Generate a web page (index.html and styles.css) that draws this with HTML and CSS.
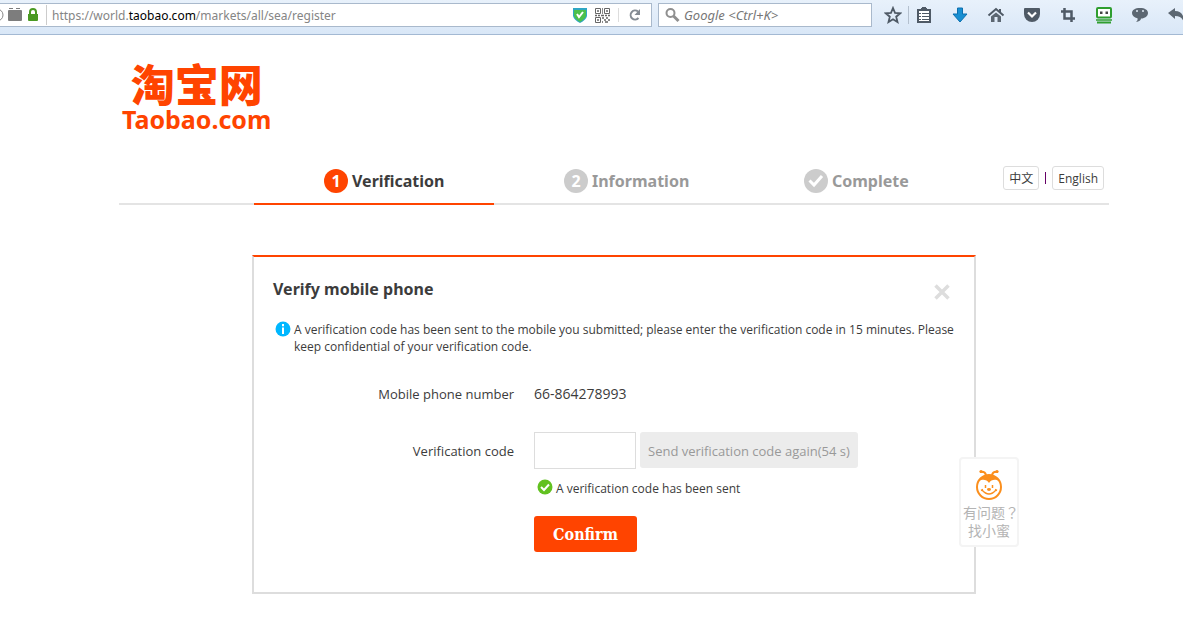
FILE: index.html
```html
<!DOCTYPE html>
<html lang="en">
<head>
    <meta charset="UTF-8">
    <meta name="viewport" content="width=device-width, initial-scale=1.0">
    <title>Taobao Register</title>
    <link rel="stylesheet" href="styles.css">
</head>
<body>

    <div class="toolbar">
        <div class="urlbar">
            <svg class="site-icons" width="40" height="16" viewBox="0 0 40 16">
                <circle cx="-3" cy="8" r="6" fill="none" stroke="#888"/>
                <path d="M9 1h4v1H9zM16 1h4v1h-4zM8 4q0-1 1-1h12q1 0 1 1v9q0 1-1 1H9q-1 0-1-1z" fill="#7d7d7d"/>
                <path d="M28 7h10v6q0 1-1 1h-8q-1 0-1-1z" fill="#4a9a22"/>
                <path d="M30 7V5a3 3 0 0 1 6 0v2" fill="none" stroke="#4a9a22" stroke-width="2"/>
            </svg>
            <div class="url" role="textbox" aria-label="Address" contenteditable="true" spellcheck="false">https://world.<span class="domain">taobao.com</span>/markets/all/sea/register</div>
            <svg width="14" height="16" viewBox="0 0 14 16">
                <path d="M0 1h14v8q-1 4-7 7-6-3-7-7z" fill="#2fa7c4"/>
                <path d="M1 3h12v6q-1 3-6 6-5-3-6-6z" fill="#4cc04a"/>
                <path d="M4 7l2 3 4-5" fill="none" stroke="#fff" stroke-width="2"/>
            </svg>
            <svg class="qr" width="15" height="15" viewBox="0 0 15 15" fill="none" stroke="#666">
                <path d="M.5.5h5v5h-5zM9.500.5h5v5h-5zM.5 9.500h5v5h-5z"/>
                <path d="M2 3h2M11 3h2M2 12h2M7 1h1M7 3h1M7 5h1M0 7.500h2M3 7.500h2M6 7.500h3M10 7.500h2M13 7.500h2M7 10h2M11 10h2M9 12h2M13 12h2M7 14h1M10 14h3" stroke-width="1.500"/>
            </svg>
            <button class="reload" type="button" aria-label="Reload">
                <svg width="14" height="14" viewBox="0 0 14 14">
                    <path d="M10 3.500A4.500 4.500 0 1 0 10.500 10" fill="none" stroke="#848b93" stroke-width="2"/>
                    <path d="M12 1v6H6.500z" fill="#848b93"/>
                </svg>
            </button>
        </div>
        <label class="searchbar">
            <svg width="16" height="16" viewBox="0 0 16 16" fill="none" stroke="#8f8f8f">
                <circle cx="5.500" cy="6" r="4" stroke-width="2"/>
                <path d="M8.500 9l5 5" stroke-width="3"/>
            </svg>
            <input type="text" class="search-input" placeholder="Google &lt;Ctrl+K&gt;" aria-label="Search">
        </label>
        <div class="tools">
            <button class="tool star" type="button" aria-label="Bookmark">
                <svg width="18" height="18" viewBox="0 0 18 18"><path d="M9 2l2 4.800 5.200.5-4 3.400 1.300 5.300L9 13.200 4.500 16l1.300-5.300-4-3.400L7 6.800z" fill="none" stroke="#4f5a66" stroke-width="1.800"/></svg>
            </button>
            <button class="tool" type="button" aria-label="Bookmarks list">
                <svg width="18" height="18" viewBox="0 0 18 18"><path d="M3 4h12v12H3z" fill="#fff" stroke="#4f5a66" stroke-width="2"/><path d="M6 4V2h1V1h4v1h1v2z" fill="#4f5a66"/><path d="M4 7.500h2M4 10.500h2M4 13.500h2M7 7.500h7M7 10.500h7M7 13.500h7" stroke="#4f5a66"/></svg>
            </button>
            <button class="tool" type="button" aria-label="Downloads">
                <svg width="18" height="18" viewBox="0 0 18 18"><path d="M6.500 2h5v6H16l-7 8-7-8h4.500z" fill="#188fd2" stroke="#0c6fae"/></svg>
            </button>
            <button class="tool" type="button" aria-label="Home">
                <svg width="18" height="18" viewBox="0 0 18 18"><path d="M1.500 9.500L9 3l7.500 6.500M13 3v3" fill="none" stroke="#4f5a66" stroke-width="2"/><path d="M4 10.500l5-4 5 4V16h-3.500v-5h-3v5H4z" fill="#5c6772"/></svg>
            </button>
            <button class="tool" type="button" aria-label="Pocket">
                <svg width="18" height="18" viewBox="0 0 18 18"><path d="M2 2h14q1 0 1 1v5a8 8 0 0 1-16 0V3q0-1 1-1z" fill="#4f5a66"/><path d="M5 6.500l4 4 4-4" fill="none" stroke="#fff" stroke-width="2.200"/></svg>
            </button>
            <button class="tool" type="button" aria-label="Screenshot">
                <svg width="18" height="18" viewBox="0 0 18 18"><path d="M5.500 2v10.500H16M2 5.500h10.500V16" fill="none" stroke="#4f5a66" stroke-width="2.500"/></svg>
            </button>
            <button class="tool" type="button" aria-label="Form filler">
                <svg width="18" height="18" viewBox="0 0 18 18"><rect x="2" y="2" width="14" height="9.500" rx="1" fill="#fff" stroke="#2f9e2f" stroke-width="2"/><path d="M5 5.500h2.500V8H5zM10.500 5.500H13V8h-2.500z" fill="#444"/><path d="M1 14h16" stroke="#2f9e2f" stroke-width="1.500"/><path d="M2 16.500h14" stroke="#2f9e2f" stroke-width="2"/></svg>
            </button>
            <button class="tool" type="button" aria-label="Chat">
                <svg width="18" height="18" viewBox="0 0 18 18"><path d="M9 2c5 0 8 2 8 5s-3 5.500-7 5.500c0 2-2 3-5 3.500 1-1 2-2 1.500-3.800C3 11.500 1 9.500 1 7c0-3 3-5 8-5z" fill="#5c6772"/><circle cx="6" cy="5" r="1" fill="#dfe9f5"/><circle cx="12" cy="5" r="1" fill="#dfe9f5"/></svg>
            </button>
            <button class="tool" type="button" aria-label="Undo">
                <svg width="18" height="18" viewBox="0 0 18 18"><path d="M1 7l7-5v3c6 0 9 4 9 11-2-4-4-6-9-6v3z" fill="#5c6772"/></svg>
            </button>
        </div>
    </div>

    <div class="container">
        <a class="logo" href="#">
            <span class="logo-cn" lang="zh-CN">淘宝网</span>
            <span class="logo-en">Taobao.com</span>
        </a>

        <div class="steps-bar">
            <ol class="steps">
                <li class="step active"><span class="num">1</span>Verification</li>
                <li class="step"><span class="num">2</span>Information</li>
                <li class="step"><span class="num"><svg width="16" height="14" viewBox="0 0 16 14"><path d="M1.500 6.500L6 11l8-9" fill="none" stroke="#fff" stroke-width="3"/></svg></span>Complete</li>
            </ol>
            <div class="lang">
                <a href="#" lang="zh-CN">中文</a>
                <span class="divider"></span>
                <a href="#">English</a>
            </div>
        </div>

        <div class="panel">
            <div class="panel-head">
                <h2>Verify mobile phone</h2>
                <button class="close" type="button" aria-label="Close">
                    <svg width="16" height="16" viewBox="0 0 16 16"><path d="M1.500 1.500l13 13M14.500 1.500l-13 13" stroke="#ddd" stroke-width="3.500"/></svg>
                </button>
            </div>

            <div class="notice">
                <svg width="16" height="16" viewBox="0 0 16 16"><circle cx="8" cy="8" r="7.500" fill="#00b7ff"/><path d="M8 3v2.200M8 6.500V13" stroke="#fff" stroke-width="2"/></svg>
                <p>A verification code has been sent to the mobile you submitted; please enter the verification code in 15 minutes. Please keep confidential of your verification code.</p>
            </div>

            <form class="verify-form">
                <span class="label">Mobile phone number</span>
                <span class="phone">66-864278993</span>

                <label class="label" for="code">Verification code</label>
                <div class="code-group">
                    <input type="text" id="code" name="code">
                    <button class="resend" type="button" disabled>Send verification code again(54 s)</button>
                </div>

                <div class="message">
                    <svg width="16" height="16" viewBox="0 0 16 16"><circle cx="8" cy="8" r="7.500" fill="#62c120"/><path d="M4 8l3 3 5-5.500" fill="none" stroke="#fff" stroke-width="2"/></svg>
                    <span>A verification code has been sent</span>
                </div>

                <button class="confirm" type="submit">Confirm</button>
            </form>

            <a class="help" href="#">
                <svg width="30" height="32" viewBox="0 0 30 32">
                    <circle cx="15" cy="18" r="12" fill="#fff" stroke="#fb8f1d" stroke-width="2"/>
                    <path d="M3 16C5 8 10 6 15 6s10 2 12 10c-1-6-9-7-12-2-3-5-11-4-12 2z" fill="#fb8f1d"/>
                    <path d="M12 6q-1-4-6-3M18 6q1-4 6-3" fill="none" stroke="#fb8f1d" stroke-width="2"/>
                    <circle cx="7" cy="2.500" r="1.600" fill="#fb8f1d"/>
                    <circle cx="23" cy="2.500" r="1.600" fill="#fb8f1d"/>
                    <path d="M11.500 16v3M18.500 16v3" stroke="#fb8f1d" stroke-width="1.500"/>
                    <ellipse cx="15" cy="20.500" rx="2" ry="1.400" fill="#fb8f1d"/>
                    <path d="M8 21q7 8 14 0M7 21.500l2-1M21 20.500l2 1" fill="none" stroke="#fb8f1d" stroke-width="1.500"/>
                </svg>
                <span class="question">有问题？</span>
                <span>找小蜜</span>
            </a>
        </div>
    </div>

</body>
</html>
```
FILE: styles.css
```css
* {
    box-sizing: border-box;
}

body {
    margin: 0;
    background: white;
    color: #3c3c3c;
    font-family: "Open Sans", "Noto Sans CJK SC", sans-serif;
    font-size: 12px;
}

button {
    font-family: inherit;
    border: none;
    padding: 0;
    background: none;
    cursor: pointer;
}

a {
    color: inherit;
    text-decoration: none;
}

svg {
    display: block;
    flex: none;
}

/* browser toolbar */
.toolbar {
    display: flex;
    height: 35px;
    padding-top: 3px;
    background: linear-gradient(#e8f1fb, #d9e7f7);
    border-bottom: 1px solid #a3b9d3;
    overflow: hidden;
}

.urlbar,
.searchbar {
    display: flex;
    align-items: center;
    height: 24px;
    background: white;
    border: 1px solid #a9b9cc;
}

.urlbar {
    flex: 1;
    min-width: 0;
    border-left: none;
    margin-right: 6px;
    font-family: "Noto Sans", sans-serif;
}

.url {
    flex: 1;
    min-width: 0;
    margin-left: 6px;
    padding: 2px 0 0 5px;
    border-left: 1px solid #ccc;
    line-height: 18px;
    color: #858585;
    white-space: nowrap;
    overflow: hidden;
    outline: none;
}

.domain {
    color: black;
}

.qr {
    margin: 0 8px;
}

.reload {
    display: flex;
    justify-content: center;
    width: 33px;
    border-left: 1px solid #ddd;
}

.searchbar {
    flex: 0 1 214px;
    padding-left: 6px;
}

.search-input {
    flex: 1;
    min-width: 0;
    border: none;
    padding: 0 3px;
    outline: none;
    font: italic 13px "Noto Sans", sans-serif;
}

.search-input::placeholder {
    color: #777;
}

.tools {
    display: flex;
    flex: 0 0 311px;
    align-items: center;
    gap: 6px;
    height: 24px;
    padding-left: 6px;
    overflow: hidden;
}

.tool {
    display: flex;
    flex: none;
    justify-content: center;
    width: 30px;
}

.star {
    width: 31px;
    margin-right: -6px;
    border-right: 1px solid #b4c0ce;
}

/* page */
.container {
    max-width: 1183px;
    padding: 26px 74px 29px 119px;
}

.logo {
    display: inline-flex;
    flex-direction: column;
    align-items: center;
    color: #ff4400;
}

.logo-cn {
    font: 900 44px "Noto Sans CJK SC", sans-serif;
    line-height: 44px;
}

.logo-en {
    padding: 0 3px;
    font: bold 25px "Noto Sans", sans-serif;
    line-height: 28px;
}

.steps-bar {
    display: grid;
    grid-template-columns: 1fr minmax(0, 720px) 1fr;
    height: 46px;
    margin-top: 26px;
    border-bottom: 2px solid #e4e4e4;
}

.steps {
    grid-column: 2;
    display: flex;
    margin: 0;
    padding: 0;
    list-style: none;
}

.step {
    display: flex;
    flex: 1;
    align-items: center;
    gap: 4px;
    height: 46px;
    padding-left: 70px;
    border-bottom: 2px solid transparent;
    color: #999;
    font: bold 16px "Noto Sans", sans-serif;
}

.step.active {
    color: #3c3c3c;
    border-bottom-color: #ff4400;
}

.num {
    display: flex;
    align-items: center;
    justify-content: center;
    width: 24px;
    height: 24px;
    border-radius: 50%;
    background: #ccc;
    color: white;
}

.active .num {
    background: #ff4400;
}

.lang {
    display: flex;
    justify-content: flex-end;
    align-items: center;
    height: 38px;
    padding-right: 5px;
}

.lang a {
    height: 24px;
    padding: 0 5px;
    border: 1px solid #ddd;
    border-radius: 3px;
    line-height: 24px;
}

.divider {
    width: 1px;
    height: 12px;
    margin: 0 6px;
    background: #606;
}

.panel {
    position: relative;
    max-width: 724px;
    margin: 50px auto 0;
    padding: 21px 14px 40px 19px;
    border: 2px solid #ddd;
    border-top-color: #ff4400;
}

.panel-head {
    display: flex;
    justify-content: space-between;
    align-items: flex-end;
    padding-right: 10px;
}

.panel-head h2 {
    margin: 0;
    font: bold 16px "Noto Sans", sans-serif;
    line-height: 22px;
}

.notice {
    display: flex;
    gap: 3px;
    margin-top: 21px;
    padding-left: 2px;
}

.notice p {
    margin: 0;
    line-height: 17px;
}

.verify-form {
    display: grid;
    grid-template-columns: 241px 1fr;
    column-gap: 20px;
    margin-top: 28px;
    align-items: center;
    font-size: 13px;
}

.label {
    text-align: right;
}

.phone,
.label {
    line-height: 22px;
}

.phone {
    font-size: 14px;
}

.code-group {
    display: flex;
    gap: 4px;
    margin: 27px 0 10px;
}

.verify-form .label[for] {
    margin-top: 17px;
}

.code-group input {
    width: 102px;
    height: 37px;
    padding: 0 8px;
    border: 1px solid #ddd;
    font-size: 14px;
}

.resend {
    height: 36px;
    padding: 2px 8px 0;
    border-radius: 3px;
    background: #ececec;
    color: #999;
    font-size: 13px;
}

.message {
    grid-column: 2;
    display: flex;
    gap: 3px;
    padding-left: 3px;
    font-size: 12px;
    line-height: 20px;
}

.confirm {
    grid-column: 2;
    width: 103px;
    height: 36px;
    margin-top: 17px;
    border-radius: 3px;
    background: #ff4400;
    color: white;
    font: bold 16px "DejaVu Serif Condensed", "DejaVu Serif", serif;
}

/* help box over the panel edge */
.help {
    position: absolute;
    top: 200px;
    right: -45px;
    display: flex;
    flex-direction: column;
    align-items: center;
    width: 60px;
    height: 90px;
    padding-top: 10px;
    border: 2px solid #f4f4f4;
    border-radius: 4px;
    background: white;
    color: #b4b4b4;
    font: 14px "Noto Sans CJK TC", sans-serif;
    line-height: 18px;
    white-space: nowrap;
}

.question {
    padding: 2px 0 0 4px;
}

@media (max-width: 1000px) {
    .container {
        padding-left: 50px;
        padding-right: 50px;
    }

    .step {
        padding-left: 20px;
    }
}
```
